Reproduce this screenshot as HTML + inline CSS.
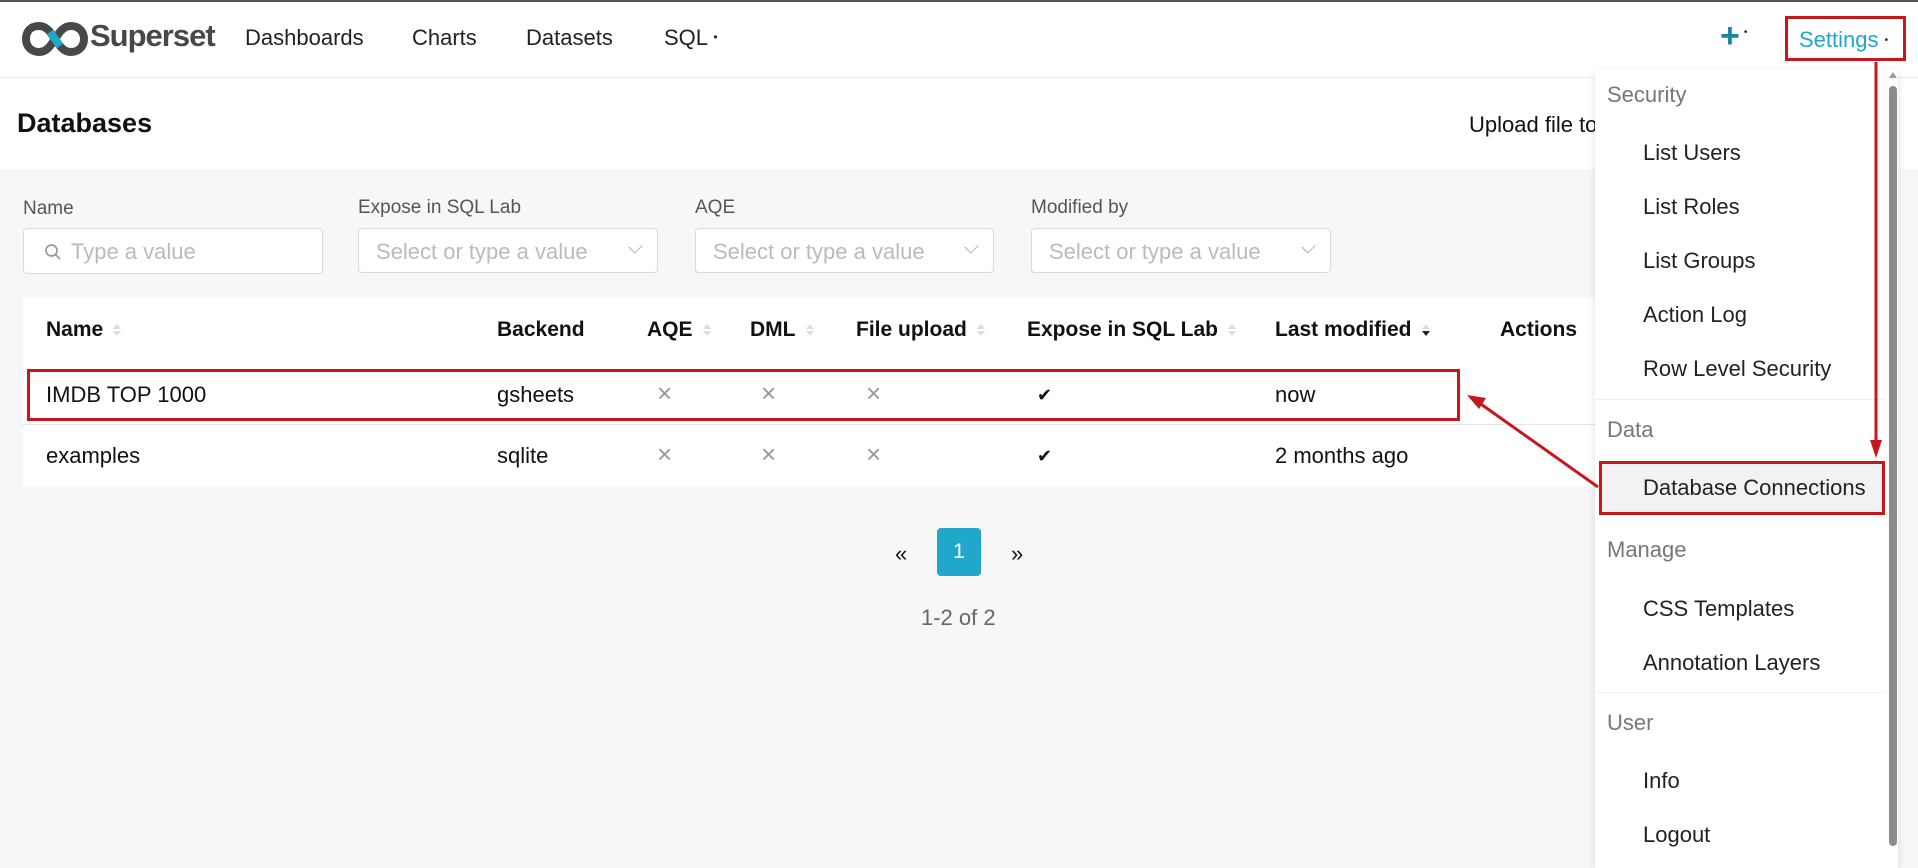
<!DOCTYPE html>
<html><head><meta charset="utf-8"><style>
*{margin:0;padding:0;box-sizing:border-box}
body{width:1918px;height:868px;overflow:hidden;background:#f7f7f7;font-family:"Liberation Sans",sans-serif;color:#111;position:relative}
.a{position:absolute;white-space:nowrap}
.nav{font-size:22px;top:25px;color:#222}
.lbl{font-size:19px;color:#555;top:197px}
.inp{position:absolute;top:228px;height:45px;background:#fff;border:1px solid #d9d9d9;border-radius:4px;font-size:22px;color:#bbb;padding:10px 17px}
.inp .chev{position:absolute;right:16px;top:12px;width:11px;height:11px;border-right:1.5px solid #aaa;border-bottom:1.5px solid #aaa;transform:rotate(45deg) scaleX(.8)}
.th{font-size:21px;font-weight:bold;top:318px}
.td{font-size:22px;top:382px}
.td2{font-size:22px;top:443px}
.x{color:#999;font-size:26px}
.xx{top:378px}.xx2{top:439px}
.sort{display:inline-block;width:8px;height:12px;margin-left:10px;vertical-align:middle;position:relative}
.sort:before,.sort:after{content:"";position:absolute;left:0;border-left:4px solid transparent;border-right:4px solid transparent}
.sort:before{top:0;border-bottom:5px solid #ddd}
.sort:after{bottom:0;border-top:5px solid #ddd}
.sort.d:after{border-top-color:#222}
.mi{font-size:22px;left:1643px;color:#222}
.mg{font-size:22px;left:1607px;color:#777}
</style></head><body>
<div class="a" style="left:0;top:0;width:1918px;height:2px;background:#555"></div>
<div class="a" style="left:0;top:2px;width:1918px;height:75px;background:#fff"></div>
<div class="a" style="left:0;top:77px;width:1918px;height:92px;background:#fff;border-top:1px solid #eee"></div>
<!-- logo -->
<svg class="a" style="left:22px;top:21px" width="66" height="36" viewBox="0 0 66 36">
<path d="M17 5 C7 5 4 12 4 18 C4 25 9 31 17 31 C26 31 30 22 33 18 C36 14 40 5 49 5 C58 5 62 12 62 18 C62 25 57 31 49 31 C40 31 36 22 33 18 C30 14 26 5 17 5 Z" fill="none" stroke="#484848" stroke-width="8"/>
<path d="M28 11 L38 25" stroke="#20a7c9" stroke-width="8"/>
</svg>
<div class="a" style="left:90px;top:18px;font-size:31px;font-weight:bold;color:#484848;letter-spacing:-1px">Superset</div>
<div class="a nav" style="left:245px">Dashboards</div>
<div class="a nav" style="left:412px">Charts</div>
<div class="a nav" style="left:526px">Datasets</div>
<div class="a nav" style="left:664px">SQL <span style="font-size:12px;vertical-align:4px">•</span></div>
<div class="a" style="left:1720px;top:17px;font-size:34px;color:#1985a0;font-weight:bold">+<span style="font-size:10px;color:#222;vertical-align:12px;margin-left:4px;font-weight:normal">•</span></div>
<div class="a" style="left:1799px;top:27px;font-size:22px;color:#20a7c9">Settings <span style="font-size:10px;color:#222;vertical-align:4px">•</span></div>
<div class="a" style="left:1785px;top:16px;width:121px;height:45px;border:3px solid #c8161d"></div>
<div class="a" style="left:17px;top:108px;font-size:27px;font-weight:bold">Databases</div>
<div class="a" style="left:1469px;top:112px;font-size:22px">Upload file to</div>
<!-- filters -->
<div class="a lbl" style="left:23px;top:198px">Name</div>
<div class="a lbl" style="left:358px">Expose in SQL Lab</div>
<div class="a lbl" style="left:695px">AQE</div>
<div class="a lbl" style="left:1031px">Modified by</div>
<div class="inp" style="left:23px;width:300px;top:228px;height:46px;padding-left:47px">Type a value
<svg class="a" style="left:20px;top:14px" width="18" height="18" viewBox="0 0 18 18"><circle cx="7.5" cy="7.5" r="5.5" fill="none" stroke="#999" stroke-width="1.7"/><path d="M11.5 11.5 L16 16" stroke="#999" stroke-width="1.7"/></svg></div>
<div class="inp" style="left:358px;width:300px">Select or type a value<span class="chev"></span></div>
<div class="inp" style="left:695px;width:299px">Select or type a value<span class="chev"></span></div>
<div class="inp" style="left:1031px;width:300px">Select or type a value<span class="chev"></span></div>
<!-- table -->
<div class="a" style="left:23px;top:298px;width:1580px;height:188px;background:#fff"></div>
<div class="a" style="left:23px;top:424px;width:1580px;height:1px;background:#e6e6e6"></div>
<div class="a th" style="left:46px">Name<span class="sort"></span></div>
<div class="a th" style="left:497px">Backend</div>
<div class="a th" style="left:647px">AQE<span class="sort"></span></div>
<div class="a th" style="left:750px">DML<span class="sort"></span></div>
<div class="a th" style="left:856px">File upload<span class="sort"></span></div>
<div class="a th" style="left:1027px">Expose in SQL Lab<span class="sort"></span></div>
<div class="a th" style="left:1275px">Last modified<span class="sort d"></span></div>
<div class="a th" style="left:1500px">Actions</div>
<div class="a td" style="left:46px">IMDB TOP 1000</div>
<div class="a td" style="left:497px">gsheets</div>
<div class="a x xx" style="left:657px">×</div>
<div class="a x xx" style="left:761px">×</div>
<div class="a x xx" style="left:866px">×</div>
<div class="a td" style="left:1037px;font-size:18px;top:385px">✔</div>
<div class="a td" style="left:1275px">now</div>
<div class="a td2" style="left:46px">examples</div>
<div class="a td2" style="left:497px">sqlite</div>
<div class="a x xx2" style="left:657px">×</div>
<div class="a x xx2" style="left:761px">×</div>
<div class="a x xx2" style="left:866px">×</div>
<div class="a td2" style="left:1037px;font-size:18px;top:446px">✔</div>
<div class="a td2" style="left:1275px">2 months ago</div>
<div class="a" style="left:27px;top:369px;width:1433px;height:52px;border:3px solid #c8161d"></div>
<!-- pagination -->
<div class="a" style="left:895px;top:541px;font-size:22px">«</div>
<div class="a" style="left:937px;top:528px;width:44px;height:48px;background:#20a7c9;border-radius:4px;color:#fff;font-size:21px;text-align:center;line-height:48px">1</div>
<div class="a" style="left:1011px;top:541px;font-size:22px">»</div>
<div class="a" style="left:921px;top:605px;font-size:22px;color:#666">1-2 of 2</div>
<!-- dropdown -->
<div class="a" style="left:1595px;top:70px;width:303px;height:798px;background:#fff;box-shadow:0 3px 8px rgba(0,0,0,.12)"></div>
<div class="a mg" style="top:82px">Security</div>
<div class="a mi" style="top:140px">List Users</div>
<div class="a mi" style="top:194px">List Roles</div>
<div class="a mi" style="top:248px">List Groups</div>
<div class="a mi" style="top:302px">Action Log</div>
<div class="a mi" style="top:356px">Row Level Security</div>
<div class="a" style="left:1595px;top:399px;width:290px;height:1px;background:#f0f0f0"></div>
<div class="a mg" style="top:417px">Data</div>
<div class="a" style="left:1599px;top:461px;width:286px;height:54px;background:#f2f2f2;border:3px solid #c8161d"></div>
<div class="a mi" style="top:475px">Database Connections</div>
<div class="a mg" style="top:537px">Manage</div>
<div class="a mi" style="top:596px">CSS Templates</div>
<div class="a mi" style="top:650px">Annotation Layers</div>
<div class="a" style="left:1595px;top:692px;width:290px;height:1px;background:#f0f0f0"></div>
<div class="a mg" style="top:710px">User</div>
<div class="a mi" style="top:768px">Info</div>
<div class="a mi" style="top:822px">Logout</div>
<!-- scrollbar -->
<div class="a" style="left:1889px;top:86px;width:8px;height:760px;background:#8c8c8c;border-radius:4px"></div>
<div class="a" style="left:1889px;top:72px;border-left:4px solid transparent;border-right:4px solid transparent;border-bottom:6px solid #999"></div>
<!-- arrows -->
<svg class="a" style="left:0;top:0" width="1918" height="868">
<line x1="1876" y1="62" x2="1876" y2="445" stroke="#c8161d" stroke-width="3"/>
<polygon points="1870,440 1882,440 1876,458" fill="#c8161d"/>
<line x1="1598" y1="487" x2="1478" y2="402" stroke="#c8161d" stroke-width="3"/>
<polygon points="1467,395 1486,398 1479,409" fill="#c8161d"/>
</svg>
</body></html>
